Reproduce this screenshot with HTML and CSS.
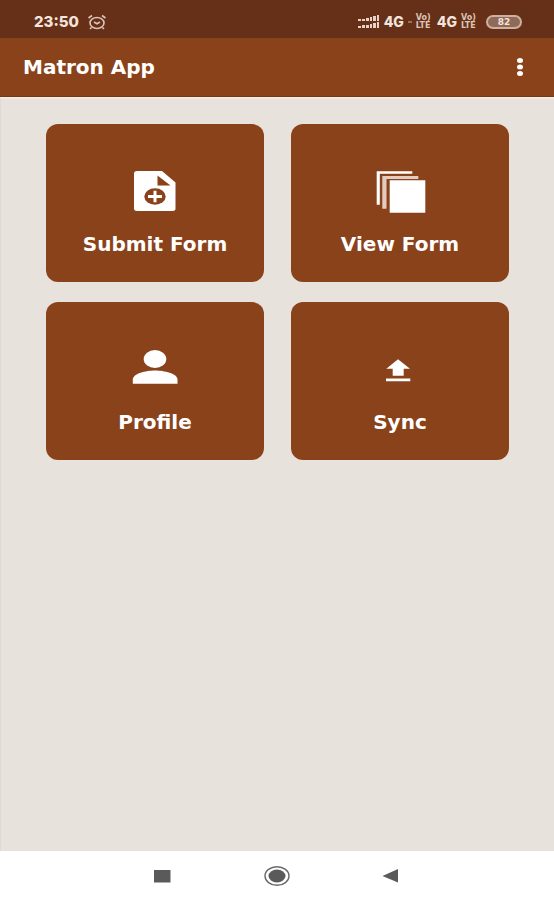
FILE: index.html
```html
<!DOCTYPE html>
<html lang="en">
<head>
<meta charset="utf-8">
<meta name="viewport" content="width=device-width, initial-scale=1">
<title>Matron App</title>
<link rel="stylesheet" href="styles.css">
</head>
<body>
<div class="status">
  <span class="time">23:50</span>
  <svg class="alarm" width="20" height="18" viewBox="0 0 20 18" aria-hidden="true">
    <ellipse cx="10" cy="10" rx="7" ry="5.500"/>
    <path d="M1.500 5 5 2.500M18.500 5 15 2.500M4.500 14.500 3 16M15.500 14.500 17 16M7 9l3 1.800L13 9"/>
  </svg>
  <div class="signals">
    <svg class="bars" width="22" height="14" viewBox="0 0 22 14" aria-hidden="true">
      <path d="M0 4h3v2H0zM4 4h3v2H4zM8 3h3v3H8zM12 2h2v4h-2zM15 1h3v5h-3zM19 0h2v6h-2zM0 11h3v2H0zM4 10h3v3H4zM8 10h3v3H8zM12 9h2v4h-2zM15 8h3v5h-3zM19 7h2v6h-2z"/>
    </svg>
    <span class="net">4G</span>
    <span class="dot"></span>
    <span class="volte"><span>Vo)</span><span>LTE</span></span>
    <span class="net">4G</span>
    <span class="volte"><span>Vo)</span><span>LTE</span></span>
    <span class="battery">82</span>
  </div>
</div>
<header class="appbar">
  <h1>Matron App</h1>
  <button class="more" type="button" aria-label="More options">
    <svg width="8" height="20" viewBox="0 0 8 20"><ellipse cx="4" cy="3.500" rx="3" ry="2.500"/><ellipse cx="4" cy="10" rx="3" ry="2.500"/><ellipse cx="4" cy="16.500" rx="3" ry="2.500"/></svg>
  </button>
</header>
<main class="content">
  <button class="card" type="button">
    <svg width="56" height="48" viewBox="0 0 56 48" aria-hidden="true">
      <path class="fill" d="M10 4H35L48.500 15.500V41.500Q48.500 44 45.500 44H10Q7 44 7 41.500V6.500Q7 4 10 4Z"/>
      <path class="cut" d="M30.500 8.500V18.500H43.500Z"/>
      <ellipse class="cut" cx="28" cy="29.500" rx="10.700" ry="8.200"/>
      <path class="fill" d="M26.500 23.700h3v4.400h5.500v2.800h-5.500v4.400h-3v-4.400H21v-2.800h5.500z"/>
    </svg>
    <span>Submit Form</span>
  </button>
  <button class="card" type="button">
    <svg width="56" height="48" viewBox="0 0 56 48" aria-hidden="true">
      <path class="fill" d="M4.700 4.300H40.300V6.800H7.800V37.700H4.700ZM17.700 13.300H53.300V45.700H17.700Z"/>
      <path class="back" d="M10.300 9H46.300V12H14.500V41.700H10.300Z"/>
    </svg>
    <span>View Form</span>
  </button>
  <button class="card" type="button">
    <svg width="56" height="48" viewBox="0 0 56 48" aria-hidden="true">
      <ellipse class="fill" cx="28" cy="14" rx="11.300" ry="9"/>
      <path class="fill" d="M5.800 38.700V34.500C5.800 28.500 19 25.500 28 25.500S50.500 28.500 50.500 34.500V38.700Z"/>
    </svg>
    <span>Profile</span>
  </button>
  <button class="card" type="button">
    <svg width="56" height="48" viewBox="0 0 56 48" aria-hidden="true">
      <path class="fill" d="M26 14.300 38 23.700H31.700V30.700H20.700V23.700H14.300ZM14 33.500H38.300V36.300H14Z"/>
    </svg>
    <span>Sync</span>
  </button>
</main>
<nav class="nav">
  <button type="button" aria-label="Recent apps"><svg width="28" height="24" viewBox="0 0 28 24"><path d="M6 6H22.500V18.500H6Z"/></svg></button>
  <button type="button" aria-label="Home"><svg width="28" height="24" viewBox="0 0 28 24"><ellipse class="ring" cx="14" cy="12" rx="12" ry="9.300"/><ellipse cx="14" cy="12" rx="8.500" ry="6.500"/></svg></button>
  <button type="button" aria-label="Back"><svg width="28" height="24" viewBox="0 0 28 24"><path d="M4.500 12 20 5V18.500Z"/></svg></button>
</nav>
</body>
</html>
```
FILE: styles.css
```css
* { box-sizing: border-box; }

body {
  margin: 0;
  min-height: 100vh;
  display: flex;
  flex-direction: column;
  background: #e8e2dc;
  font-family: "DejaVu Sans", sans-serif;
  color: #fff;
}

button {
  margin: 0;
  padding: 0;
  border: 0;
  background: none;
  color: inherit;
  font: inherit;
}

svg { display: block; }

.status {
  display: flex;
  align-items: center;
  height: 38px;
  padding: 6px 32px 0 34px;
  background: #662f17;
  color: #f3e5dc;
}

.time {
  font-family: Inter, sans-serif;
  font-size: 15px;
  line-height: 20px;
  font-weight: 800;
}

.alarm {
  margin-left: 8px;
  fill: none;
  stroke: #dcc4b6;
  stroke-width: 1.6;
}

.signals {
  display: flex;
  align-items: center;
  gap: 4px;
  margin-left: auto;
}

.bars { fill: #e6d2c6; }

.net {
  font-family: Inter, sans-serif;
  font-size: 14px;
  line-height: 20px;
  font-weight: 800;
}

.dot {
  width: 4px;
  height: 2px;
  background: #9a7059;
}

.volte {
  display: flex;
  flex-direction: column;
  width: 17px;
  font-size: 8px;
  line-height: 8px;
  font-weight: 700;
  color: #dcc4b6;
}

.battery {
  width: 36px;
  height: 14px;
  margin-left: 4px;
  border: 2px solid #cdb0a1;
  border-radius: 7px;
  background: #8f6a58;
  font-size: 9px;
  line-height: 10px;
  font-weight: 700;
  text-align: center;
}

.appbar {
  display: flex;
  align-items: center;
  justify-content: space-between;
  height: 59px;
  padding: 0 30px 0 23px;
  border-bottom: 1px solid #7c3810;
  background: #8a421b;
}

.appbar h1 {
  margin: 0;
  font-size: 20px;
  line-height: 28px;
  font-weight: 700;
}

.more svg { fill: #fff; }

.content {
  flex: 1;
  display: grid;
  grid-template-columns: 1fr 1fr;
  align-content: start;
  gap: 20px 27px;
  padding: 25px 45px;
  border-left: 1px solid #e2d8d6;
  border-top: 2px solid #f0ebe8;
}

.card {
  display: flex;
  flex-direction: column;
  align-items: center;
  gap: 15px;
  padding: 43px 8px 24px;
  border-radius: 12px;
  background: #8a421b;
  font-size: 20px;
  line-height: 28px;
  font-weight: 700;
}

.fill { fill: #fff; }
.cut { fill: #8a421b; }
.back { fill: #e3cdc1; }

.nav {
  display: flex;
  justify-content: center;
  align-items: center;
  gap: 87px;
  height: 49px;
  background: #fff;
}

.nav svg { fill: #5a5a5a; }

.nav .ring {
  fill: none;
  stroke: #6a6a6a;
  stroke-width: 1.4;
}
```
